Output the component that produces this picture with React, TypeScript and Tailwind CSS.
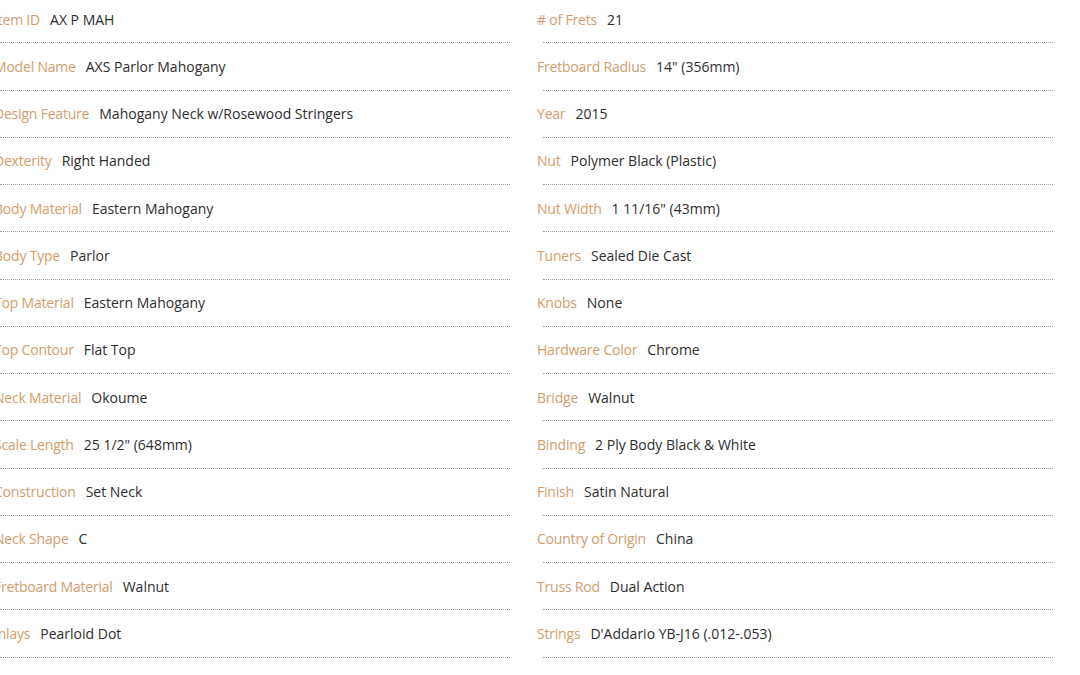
const left: [string, string][] = [
  ['Item ID', 'AX P MAH'],
  ['Model Name', 'AXS Parlor Mahogany'],
  ['Design Feature', 'Mahogany Neck w/Rosewood Stringers'],
  ['Dexterity', 'Right Handed'],
  ['Body Material', 'Eastern Mahogany'],
  ['Body Type', 'Parlor'],
  ['Top Material', 'Eastern Mahogany'],
  ['Top Contour', 'Flat Top'],
  ['Neck Material', 'Okoume'],
  ['Scale Length', '25 1/2" (648mm)'],
  ['Construction', 'Set Neck'],
  ['Neck Shape', 'C'],
  ['Fretboard Material', 'Walnut'],
  ['Inlays', 'Pearloid Dot'],
]

const right: [string, string][] = [
  ['# of Frets', '21'],
  ['Fretboard Radius', '14" (356mm)'],
  ['Year', '2015'],
  ['Nut', 'Polymer Black (Plastic)'],
  ['Nut Width', '1 11/16" (43mm)'],
  ['Tuners', 'Sealed Die Cast'],
  ['Knobs', 'None'],
  ['Hardware Color', 'Chrome'],
  ['Bridge', 'Walnut'],
  ['Binding', '2 Ply Body Black & White'],
  ['Finish', 'Satin Natural'],
  ['Country of Origin', 'China'],
  ['Truss Rod', 'Dual Action'],
  ['Strings', "D'Addario YB-J16 (.012-.053)"],
]

function SpecColumn({ rows }: { rows: [string, string][] }) {
  return (
    <ul className="w-[510px]">
      {rows.map(([label, value]) => (
        <li
          key={label}
          className="flex h-[47.25px] items-center whitespace-nowrap border-b border-dotted border-[#a0a0a0]"
        >
          <span className="ml-[-6px] tracking-[-0.2px] text-[#d19d6c]">{label}</span>
          <span className="ml-[10px] text-[#2e2e2e]">{value}</span>
        </li>
      ))}
    </ul>
  )
}

export default function App() {
  return (
    <div className="h-[675px] w-[1080px] overflow-hidden bg-white font-['Open_Sans',sans-serif] text-[14px]">
      <div className="mt-[-4px] flex gap-[33px]">
        <SpecColumn rows={left} />
        <SpecColumn rows={right} />
      </div>
    </div>
  )
}
